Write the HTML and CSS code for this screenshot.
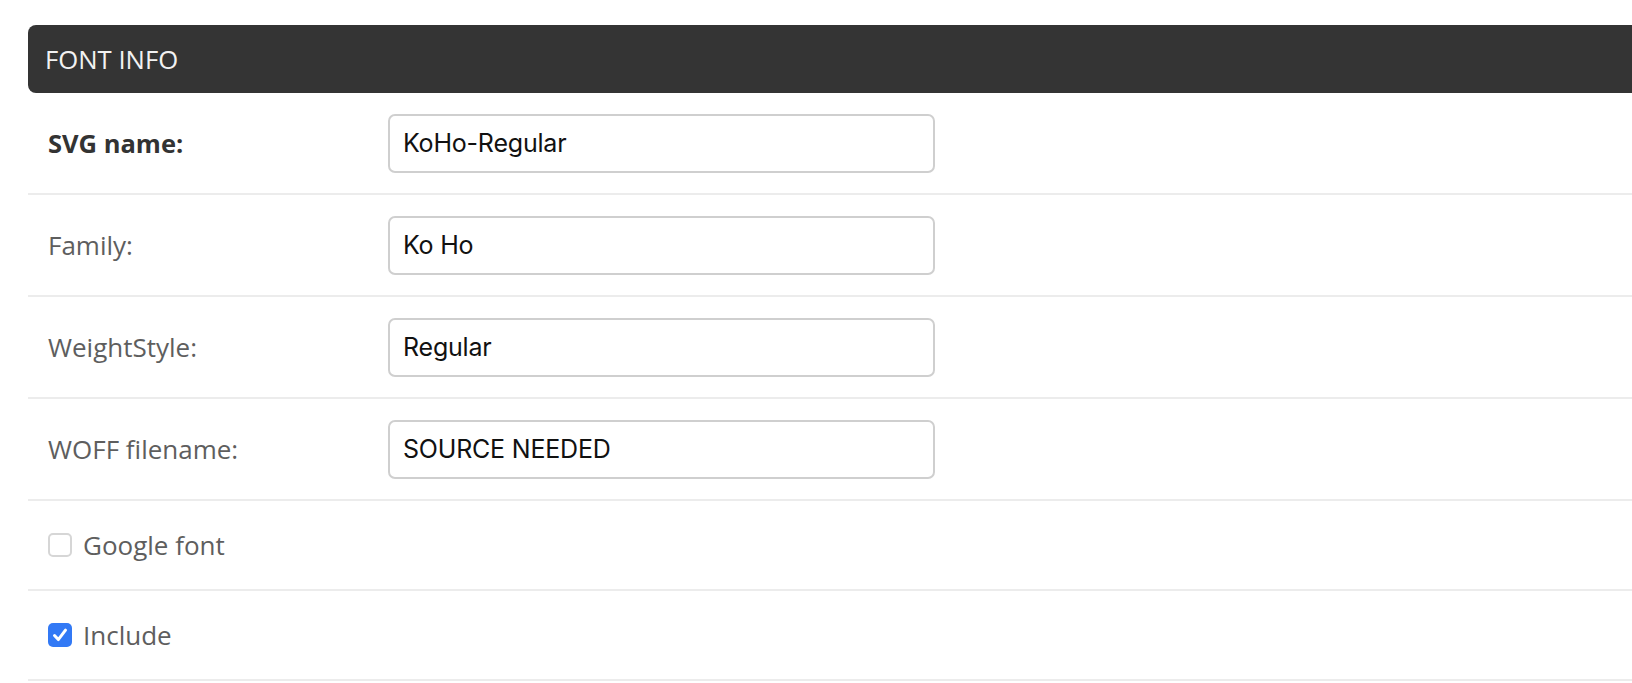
FILE: index.html
```html
<!DOCTYPE html>
<html>
<head>
<meta charset="utf-8">
<link rel="stylesheet" href="styles.css">
</head>
<body>
<section class="panel">
  <div class="panel-head">FONT INFO</div>
  <div class="row">
    <label class="label label-strong">SVG name:</label>
    <input class="field" type="text" value="KoHo-Regular">
  </div>
  <div class="row">
    <label class="label">Family:</label>
    <input class="field" type="text" value="Ko Ho">
  </div>
  <div class="row">
    <label class="label">WeightStyle:</label>
    <input class="field" type="text" value="Regular">
  </div>
  <div class="row">
    <label class="label">WOFF filename:</label>
    <input class="field" type="text" value="SOURCE NEEDED">
  </div>
  <div class="row row-check">
    <span class="box"></span>
    <span class="check-label">Google font</span>
  </div>
  <div class="row row-check">
    <span class="box box-on"><svg viewBox="0 0 24 24" width="24" height="24"><path d="M6.5 12.5 L10.3 16.6 L17.5 7.2" fill="none" stroke="#fff" stroke-width="3" stroke-linecap="round" stroke-linejoin="round"/></svg></span>
    <span class="check-label">Include</span>
  </div>
</section>
</body>
</html>
```
FILE: styles.css
```css
html, body {
  margin: 0;
  padding: 0;
  background: #ffffff;
  overflow: hidden;
}

body {
  font-family: "Open Sans", "Liberation Sans", sans-serif;
}

.panel {
  margin: 25px 0 0 28px;
}

.panel-head {
  height: 68px;
  background: #343434;
  color: #f2f2f2;
  font-size: 25.7px;
  display: flex;
  align-items: center;
  padding-left: 17px;
  border-radius: 8px 0 0 8px;
}

.row {
  display: flex;
  align-items: center;
  height: 100px;
  padding-left: 20px;
  border-bottom: 2px solid #ececec;
}

.row-check {
  height: 88px;
  gap: 11px;
}

.label {
  width: 340px;
  flex: none;
  font-size: 26px;
  color: #5e5e5e;
}

.label-strong {
  font-weight: 700;
  color: #333333;
  font-size: 25.5px;
}

.field {
  box-sizing: border-box;
  width: 547px;
  height: 59px;
  border: 2px solid #cfcfcf;
  border-radius: 7px;
  padding: 0 13px;
  font-family: "Inter", "Open Sans", sans-serif;
  font-size: 25px;
  letter-spacing: -0.2px;
  color: #111111;
  background: #ffffff;
  outline: none;
  margin: 0;
}

.box {
  box-sizing: border-box;
  width: 24px;
  height: 24px;
  border: 2px solid #d6d6d6;
  border-radius: 5px;
  background: #ffffff;
  flex: none;
  display: flex;
}

.box-on {
  border: none;
  background: #3279f5;
}

.box svg {
  display: block;
}

.check-label {
  font-size: 26px;
  color: #5e5e5e;
}
```
